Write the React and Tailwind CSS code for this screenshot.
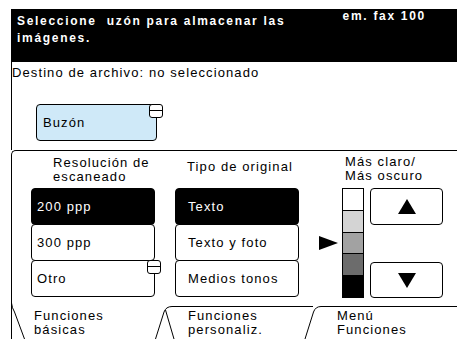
import React from 'react';

const Tag = ({ className }) => (
    <span className={`absolute w-[14px] h-[14px] rounded-[3px] border border-black bg-white flex flex-col ${className}`}>
        <span className="h-[6px] border-b border-black" />
    </span>
);

const Option = ({ label, active, first, pl, tag }) => (
    <div
        className={`relative h-[37px] rounded-[4px] border border-black flex items-center ${first ? '' : '-mt-px'} ${
            active ? 'bg-black text-white' : 'bg-white text-black'
        } ${pl}`}
    >
        {label}
        {tag && <Tag className="-top-px -right-[7px]" />}
    </div>
);

const Arrow = ({ up }) => (
    <svg width="18" height="15" viewBox="0 0 18 15">
        <polygon points={up ? '9,0 18,15 0,15' : '0,0 18,0 9,15'} fill="black" />
    </svg>
);

export default function App() {
    return (
        <div className="relative w-[457px] h-[339px] overflow-hidden bg-white text-black font-['Liberation_Sans',Arial,sans-serif] pt-[9px]">
            {/* header */}
            <div className="ml-[11px] h-[53px] bg-black text-white font-bold text-[12px] tracking-[1.7px] flex items-start">
                <div className="flex-1 pl-[6px] pt-[4px] leading-[17px] whitespace-pre">
                    <div>{'Seleccione  uzón para almacenar las'}</div>
                    <div>imágenes.</div>
                </div>
                <div className="pr-[31px] pt-[1px] leading-none">em. fax 100</div>
            </div>

            {/* destination */}
            <div className="ml-[11px] h-[88px] border-l border-black text-[13px] tracking-[1.1px]">
                <div className="pt-[3px] leading-[15px]">Destino de archivo: no seleccionado</div>
                <div className="relative ml-[24px] mt-[24px] w-[121px] h-[37px] rounded-[4px] border border-black bg-[#cfe9f8] flex items-center pl-[6px]">
                    Buzón
                    <Tag className="-top-px -right-[7px]" />
                </div>
            </div>

            {/* panel */}
            <div className="ml-[11px] h-[189px] border-l border-t border-black rounded-tl-[5px] text-[13px] tracking-[1.1px] leading-[14px]">
                <div className="flex items-start gap-[20px] pl-[19px]">
                    <div className="w-[124px] flex flex-col">
                        <div className="h-[37px] pl-[22px] pt-[5px]">
                            <div>Resolución de</div>
                            <div>escaneado</div>
                        </div>
                        <Option label="200 ppp" active first pl="pl-[5px]" />
                        <Option label="300 ppp" pl="pl-[5px]" />
                        <Option label="Otro" pl="pl-[5px]" tag />
                    </div>
                    <div className="w-[124px] flex flex-col">
                        <div className="h-[37px] pl-[12px] pt-[9px]">Tipo de original</div>
                        <Option label="Texto" active first pl="pl-[12px]" />
                        <Option label="Texto y foto" pl="pl-[12px]" />
                        <Option label="Medios tonos" pl="pl-[12px]" />
                    </div>
                    <div className="flex flex-col">
                        <div className="h-[37px] pl-[26px] pt-[4px]">
                            <div>Más claro/</div>
                            <div>Más oscuro</div>
                        </div>
                        <div className="flex items-center h-[110px]">
                            <svg width="19" height="14" viewBox="0 0 19 14" className="mr-[4px]">
                                <polygon points="0,0 19,7 0,14" fill="black" />
                            </svg>
                            <div className="w-[22px] h-[110px] border border-black flex flex-col divide-y divide-black">
                                <div className="flex-1 bg-white" />
                                <div className="flex-1 bg-[#d4d4d4]" />
                                <div className="flex-1 bg-[#a2a2a2]" />
                                <div className="flex-1 bg-[#6c6c6c]" />
                                <div className="flex-1 bg-black" />
                            </div>
                            <div className="ml-[6px] w-[73px] h-[110px] flex flex-col justify-between">
                                <div className="h-[37px] rounded-[4px] border border-black flex items-center justify-center">
                                    <Arrow up />
                                </div>
                                <div className="h-[36px] rounded-[4px] border border-black flex items-center justify-center">
                                    <Arrow />
                                </div>
                            </div>
                        </div>
                    </div>
                </div>

                {/* tabs */}
                <div className="flex pl-[22px] mt-[11px]">
                    <div className="w-[154px]">
                        <div>Funciones</div>
                        <div>básicas</div>
                    </div>
                    <div className="w-[149px]">
                        <div>Funciones</div>
                        <div>personaliz.</div>
                    </div>
                    <div>
                        <div>Menú</div>
                        <div>Funciones</div>
                    </div>
                </div>
            </div>

            {/* tab outlines */}
            <svg className="absolute inset-0 pointer-events-none" width="457" height="339" viewBox="0 0 457 339">
                <g fill="none" stroke="black" strokeWidth="1">
                    <path d="M11.5 303 Q12 308 14.5 312 L24.5 339" />
                    <path d="M155.5 339 L164 312 Q166 306.5 172 306.5 L313 306.5" />
                    <path d="M165.5 310 L174 339" />
                    <path d="M305 339 L313.5 312 Q315.5 306.5 321 306.5 L457 306.5" />
                </g>
            </svg>
        </div>
    );
}
